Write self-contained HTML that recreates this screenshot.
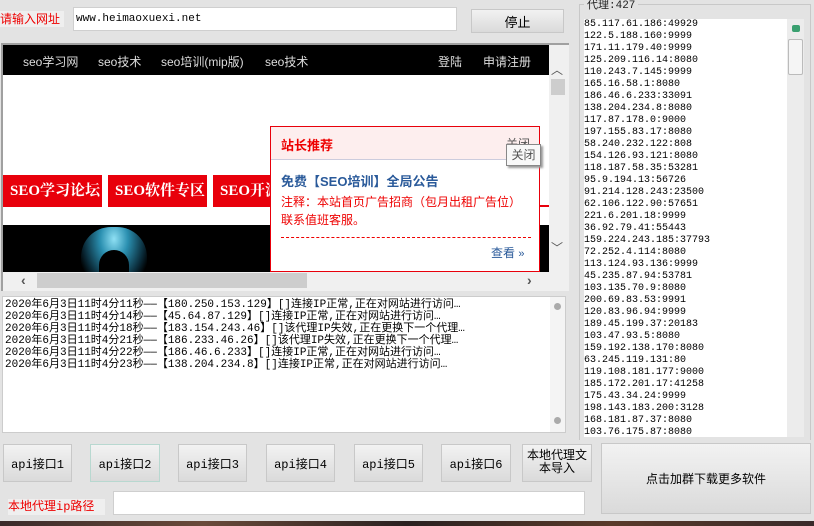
<!DOCTYPE html>
<html><head><meta charset="utf-8"><style>
*{margin:0;padding:0;box-sizing:border-box}
body{width:814px;height:526px;background:#e3e3e3;position:relative;overflow:hidden;font-family:"Liberation Sans","Noto Sans CJK SC",sans-serif;font-size:12px}
.a{position:absolute}
.btn{position:absolute;background:linear-gradient(#f2f2f2,#dadada);border:1px solid #c8c8c8;display:flex;align-items:center;justify-content:center;font-size:12px;color:#000;font-family:"Liberation Mono","Noto Sans CJK SC",monospace}
.mono{font-family:"Liberation Mono","Noto Sans CJK SC",monospace}
.nav span{position:absolute;top:8px;color:#ddd;font-size:12px}
.tab{position:absolute;top:175px;height:32px;background:#e8000b;color:#fff;font-weight:bold;font-size:15px;line-height:32px;padding-left:7px;font-family:"Liberation Serif","Noto Serif CJK SC",serif;overflow:hidden;white-space:nowrap}
</style></head><body>
<div class="a" style="left:0;top:11px;width:64px;height:16px;background:#efefef;color:#e00;font-size:12px;line-height:16px;white-space:nowrap;overflow:hidden">请输入网址</div>
<div class="a mono" style="left:73px;top:7px;width:384px;height:24px;background:#fff;border:1px solid #cfcfcf;font-size:11px;line-height:22px;padding-left:2px">www.heimaoxuexi.net</div>
<div class="btn" style="left:471px;top:9px;width:93px;height:24px;font-size:13px">停止</div>

<!-- browser -->
<div class="a" style="left:1px;top:43px;width:568px;height:248px;background:#f0f0f0;border-top:2px solid #a0a0a0;border-left:2px solid #a0a0a0"></div>
<div class="a" style="left:3px;top:45px;width:546px;height:227px;background:#fff;overflow:hidden">
 <div class="a nav" style="left:0;top:0;width:546px;height:30px;background:#000">
  <span style="left:20px">seo学习网</span><span style="left:95px">seo技术</span><span style="left:158px">seo培训(mip版)</span><span style="left:262px">seo技术</span><span style="left:435px">登陆</span><span style="left:480px">申请注册</span>
 </div>
 <div class="tab" style="left:0;width:99px;top:130px">SEO学习论坛</div>
 <div class="tab" style="left:105px;width:99px;top:130px">SEO软件专区</div>
 <div class="tab" style="left:210px;width:70px;top:130px">SEO开源</div>
 <div class="a" style="left:260px;top:160px;width:286px;height:2px;background:#e8000b"></div>
 <div class="a" style="left:0;top:180px;width:546px;height:50px;background:#000"></div>
 <div class="a" style="left:78px;top:182px;width:66px;height:60px;border-radius:30px 30px 8px 8px;background:radial-gradient(ellipse at 50% 20%,#8fe0f4 0%,#2a8fb0 30%,#0a2a38 65%,#000 80%)"></div>
 <div class="a" style="left:96px;top:205px;width:30px;height:40px;border-radius:15px 15px 0 0;background:#000"></div>
</div>
<div class="a" style="left:549px;top:45px;width:18px;height:227px;background:#f0f0f0">
 <div class="a" style="left:2px;top:16px;font-size:12px;color:#555">︿</div>
 <div class="a" style="left:2px;top:34px;width:14px;height:16px;background:#cdcdcd"></div>
 <div class="a" style="left:2px;top:194px;font-size:12px;color:#555">﹀</div>
</div>
<div class="a" style="left:3px;top:272px;width:564px;height:18px;background:#f0f0f0">
 <div class="a" style="left:34px;top:1px;width:270px;height:15px;background:#cdcdcd"></div>
 <div class="a" style="left:18px;top:0;font-size:14px;color:#555;font-weight:bold">‹</div>
 <div class="a" style="left:524px;top:0;font-size:14px;color:#555;font-weight:bold">›</div>
</div>
<!-- popup -->
<div class="a" style="left:270px;top:126px;width:270px;height:146px;background:#fff;border:1px solid #e8000b">
 <div class="a" style="left:0;top:0;width:268px;height:33px;background:#fdeeee;border-bottom:1px solid #ccd">
  <div class="a" style="left:10px;top:8px;color:#e00;font-weight:bold;font-size:13px">站长推荐</div>
  <div class="a" style="left:235px;top:8px;color:#555;font-size:12px">关闭</div>
 </div>
 <div class="a" style="left:10px;top:44px;color:#2a5a9a;font-weight:bold;font-size:13px">免费【SEO培训】全局公告</div>
 <div class="a" style="left:10px;top:66px;color:#e00;font-size:12px;line-height:18px">注释：本站首页广告招商（包月出租广告位）<br>联系值班客服。</div>
 <div class="a" style="left:10px;top:110px;width:250px;border-top:1px dashed #e00"></div>
 <div class="a" style="left:220px;top:117px;color:#2a5a9a;font-size:12px">查看 <span style="font-size:11px">»</span></div>
</div>
<div class="a" style="left:506px;top:144px;width:35px;height:22px;background:#f8f8f8;border:1px solid #888;box-shadow:2px 2px 2px #999;color:#555;font-size:12px;line-height:20px;text-align:center">关闭</div>

<!-- log -->
<div class="a mono" style="left:2px;top:296px;width:564px;height:137px;background:#fff;border:1px solid #ccc;font-size:11px;line-height:12px;padding:2px 0 0 2px;white-space:nowrap;overflow:hidden">2020年6月3日11时4分11秒——【180.250.153.129】[]连接IP正常,正在对网站进行访问…<br>2020年6月3日11时4分14秒——【45.64.87.129】[]连接IP正常,正在对网站进行访问…<br>2020年6月3日11时4分18秒——【183.154.243.46】[]该代理IP失效,正在更换下一个代理…<br>2020年6月3日11时4分21秒——【186.233.46.26】[]该代理IP失效,正在更换下一个代理…<br>2020年6月3日11时4分22秒——【186.46.6.233】[]连接IP正常,正在对网站进行访问…<br>2020年6月3日11时4分23秒——【138.204.234.8】[]连接IP正常,正在对网站进行访问…</div>
<div class="a" style="left:550px;top:297px;width:15px;height:135px;background:#f4f4f4">
 <div class="a" style="left:4px;top:6px;width:7px;height:7px;border-radius:50%;background:#aaa"></div>
 <div class="a" style="left:4px;top:120px;width:7px;height:7px;border-radius:50%;background:#aaa"></div>
</div>

<!-- proxy group -->
<div class="a" style="left:579px;top:4px;width:232px;height:436px;border:1px solid #c8c8c8;border-bottom:none"></div>
<div class="a mono" style="left:584px;top:-4px;background:#e3e3e3;padding:0 3px;font-size:11px;color:#222">代理:427</div>
<div class="a mono" style="left:584px;top:19px;width:203px;height:418px;background:#fff;font-size:10px;line-height:12px;overflow:hidden;white-space:nowrap">85.117.61.186:49929<br>122.5.188.160:9999<br>171.11.179.40:9999<br>125.209.116.14:8080<br>110.243.7.145:9999<br>165.16.58.1:8080<br>186.46.6.233:33091<br>138.204.234.8:8080<br>117.87.178.0:9000<br>197.155.83.17:8080<br>58.240.232.122:808<br>154.126.93.121:8080<br>118.187.58.35:53281<br>95.9.194.13:56726<br>91.214.128.243:23500<br>62.106.122.90:57651<br>221.6.201.18:9999<br>36.92.79.41:55443<br>159.224.243.185:37793<br>72.252.4.114:8080<br>113.124.93.136:9999<br>45.235.87.94:53781<br>103.135.70.9:8080<br>200.69.83.53:9991<br>120.83.96.94:9999<br>189.45.199.37:20183<br>103.47.93.5:8080<br>159.192.138.170:8080<br>63.245.119.131:80<br>119.108.181.177:9000<br>185.172.201.17:41258<br>175.43.34.24:9999<br>198.143.183.200:3128<br>168.181.87.37:8080<br>103.76.175.87:8080</div>
<div class="a" style="left:787px;top:19px;width:17px;height:418px;background:#ececec">
 <div class="a" style="left:5px;top:6px;width:8px;height:7px;background:#3aa070;border-radius:2px"></div>
 <div class="a" style="left:1px;top:20px;width:15px;height:36px;background:#f5f5f5;border:1px solid #bbb;border-radius:2px"></div>
</div>

<!-- buttons -->
<div class="btn" style="left:3px;top:444px;width:69px;height:38px">api接口1</div>
<div class="btn" style="left:90px;top:444px;width:70px;height:38px;border-color:#b8d8d0">api接口2</div>
<div class="btn" style="left:178px;top:444px;width:69px;height:38px">api接口3</div>
<div class="btn" style="left:266px;top:444px;width:69px;height:38px">api接口4</div>
<div class="btn" style="left:354px;top:444px;width:69px;height:38px">api接口5</div>
<div class="btn" style="left:441px;top:444px;width:70px;height:38px">api接口6</div>
<div class="btn" style="left:522px;top:444px;width:70px;height:38px;line-height:13px;text-align:center">本地代理文<br>本导入</div>
<div class="btn" style="left:601px;top:443px;width:210px;height:71px;font-family:'Liberation Sans','Noto Sans CJK SC',sans-serif">点击加群下载更多软件</div>
<div class="a mono" style="left:8px;top:499px;width:97px;height:16px;background:#efefef;color:#e00;font-size:12px;line-height:16px">本地代理ip路径</div>
<div class="a" style="left:113px;top:491px;width:472px;height:24px;background:#fff;border:1px solid #cfcfcf"></div>
<div class="a" style="left:0;top:521px;width:814px;height:5px;background:linear-gradient(90deg,#3a2a2a,#6a4a3a,#2a2020,#5a3a2a,#3a2a2a)"></div>
</body></html>
